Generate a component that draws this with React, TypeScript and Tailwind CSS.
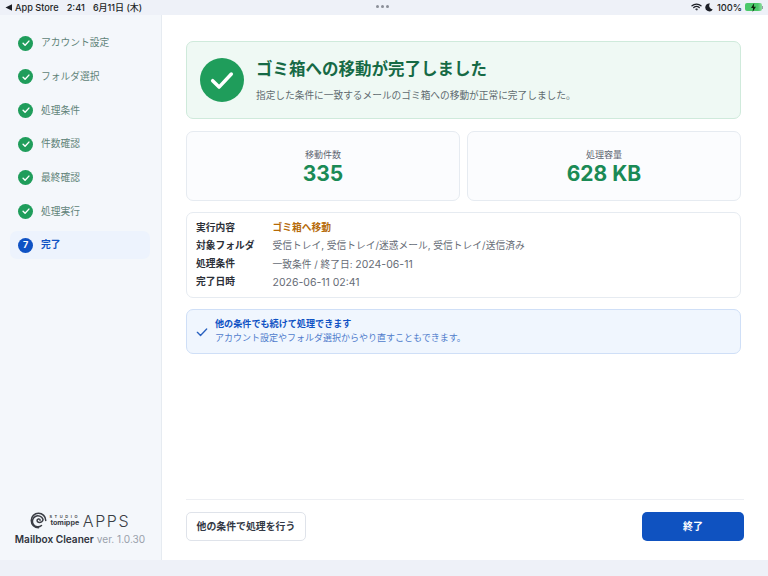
import React from "react";

const font = { fontFamily: '"Inter","Noto Sans CJK JP","Liberation Sans",sans-serif' };

function Check({ className = "", w = 3 }: { className?: string; w?: number }) {
  return (
    <svg viewBox="0 0 24 24" fill="none" stroke="currentColor" strokeWidth={w} strokeLinecap="round" strokeLinejoin="round" className={className}>
      <path d="M5 12.5l4.8 4.8L19 7.5" />
    </svg>
  );
}

const steps = ["アカウント設定", "フォルダ選択", "処理条件", "件数確認", "最終確認", "処理実行"];

function StatusBar() {
  return (
    <div className="relative flex h-[15px] items-center justify-between bg-[#eef1f8] pl-[5px] pr-[5px] text-[9.3px] leading-none text-[#1c1f26]">
      <div className="flex items-center font-medium">
        <svg width="8" height="7" viewBox="0 0 8 7" className="mr-[2px]"><path d="M0.5 3.5L7 0.3V6.7Z" fill="#1c1f26" /></svg>
        <span className="text-[9.2px]">App Store</span>
        <span className="ml-[8px]">2:41</span>
        <span className="ml-[8px] text-[9px]">6月11日 (木)</span>
      </div>
      <div className="absolute left-[376px] top-[5px] flex gap-[2px]">
        <span className="h-[3px] w-[3px] rounded-full bg-[#8b8f98]" />
        <span className="h-[3px] w-[3px] rounded-full bg-[#8b8f98]" />
        <span className="h-[3px] w-[3px] rounded-full bg-[#8b8f98]" />
      </div>
      <div className="flex items-center font-medium">
        <svg width="11" height="8" viewBox="0 0 22 16" fill="none" stroke="#1c1f26" strokeWidth="2.6" strokeLinecap="round">
          <path d="M2 5.5C7 1 15 1 20 5.5" />
          <path d="M5.5 9C8.5 6.5 13.5 6.5 16.5 9" />
          <path d="M11 14.2L9 12Q11 10.5 13 12Z" fill="#1c1f26" strokeWidth="1" />
        </svg>
        <svg width="8" height="9" viewBox="0 0 16 18" className="ml-[3px]"><path d="M10 1A8 8 0 1 0 15.5 13 7.5 7.5 0 0 1 10 1Z" fill="#1c1f26" /></svg>
        <span className="ml-[4px]">100%</span>
        <div className="ml-[3px] flex h-[8px] w-[17px] items-center justify-center rounded-[2px] bg-[linear-gradient(90deg,#4cc96b_0%,#4cc96b_75%,#8fdca3_100%)]">
          <svg width="7" height="9" viewBox="0 0 6 8"><path d="M3.6 0L0.8 4.5H2.6L2.2 8L5.2 3.3H3.3Z" fill="#10240f" /></svg>
        </div>
        <span className="h-[3px] w-[1px] bg-[#9aa0a8]" />
      </div>
    </div>
  );
}

function Logo() {
  return (
    <div className="flex items-center justify-center">
      <svg width="17" height="17" viewBox="0 0 34 34" fill="none" stroke="#3a3d44" strokeLinecap="round">
        <path d="M17 31.5A14.5 14.5 0 1 1 31.5 17" strokeWidth="3" />
        <path d="M23 27A11 11 0 1 1 26 14.5C26.5 19 21 21.5 17 20.5C13.5 19.5 13 15 16.5 14C19 13.4 20.5 15 20 16.5" strokeWidth="3" />
      </svg>
      <div className="ml-[3px] flex w-[30px] flex-col items-center text-[#3a3d44]">
        <span className="text-[4px] font-semibold leading-[5px] tracking-[2.6px]">STUDIO</span>
        <span className="whitespace-nowrap text-[7.2px] font-bold leading-[8px]">tomippe</span>
      </div>
      <span className="ml-[3px] text-[16px] font-light leading-none tracking-[1.6px] text-[#3a3d44]">APPS</span>
    </div>
  );
}

function Sidebar() {
  return (
    <aside className="flex w-[162px] shrink-0 flex-col justify-between border-r border-[#e6ebf1] bg-[#f4f7fb] pb-[14px] pl-[10px] pr-[11px] pt-[14px]">
      <nav className="flex flex-col gap-[5.7px]">
        {steps.map((s) => (
          <div key={s} className="flex h-[28px] items-center gap-[8px] pl-[8px]">
            <span className="flex h-[15px] w-[15px] items-center justify-center rounded-full bg-[#1f9d5b] text-white">
              <Check className="h-[10px] w-[10px]" w={3.4} />
            </span>
            <span className="pt-[1px] text-[9.75px] text-[#5f8378]">{s}</span>
          </div>
        ))}
        <div className="flex h-[28px] items-center gap-[8px] rounded-[7px] bg-[#edf3fd] pl-[8px]">
          <span className="flex h-[15px] w-[15px] items-center justify-center rounded-full bg-[#0f52c4] text-[9px] font-bold text-white">7</span>
          <span className="pt-[1px] text-[9.75px] font-bold text-[#0f52c4]">完了</span>
        </div>
      </nav>
      <div className="flex flex-col items-center gap-[3px]">
        <Logo />
        <div className="whitespace-nowrap text-[10.1px] leading-[14px]">
          <span className="font-semibold text-[#2f333b]">Mailbox Cleaner</span>
          <span className="ml-[3px] text-[#9aa1ab]">ver. 1.0.30</span>
        </div>
      </div>
    </aside>
  );
}

function Stat({ label, value }: { label: string; value: string }) {
  return (
    <div className="flex h-[70px] flex-1 flex-col items-center justify-center rounded-[7px] border border-[#e6ebf1] bg-[#fbfcfe] pt-[2px]">
      <span className="text-[9px] leading-[13px] text-[#5d6470]">{label}</span>
      <span className="text-[21px] font-bold leading-[26px] text-[#1a8a55]">{value}</span>
    </div>
  );
}

function Row({ k, children }: { k: string; children: React.ReactNode }) {
  return (
    <div className="flex h-[18px] items-center text-[9.75px]">
      <span className="w-[76.5px] shrink-0 font-semibold text-[#2c3038]">{k}</span>
      {children}
    </div>
  );
}

function Main() {
  return (
    <main className="flex min-w-0 flex-1 flex-col bg-white pb-[19px] pl-[24px] pr-[24px] pt-[26px]">
      <div className="flex flex-1 flex-col gap-[11px] pr-[3px]">
        <section className="mb-[1px] flex h-[78px] items-center rounded-[7px] border border-[#cfeadb] bg-[#eff9f4] pl-[13px]">
          <span className="flex h-[44px] w-[44px] items-center justify-center rounded-full bg-[#1f9d5b] text-white">
            <Check className="h-[32px] w-[32px]" w={2.6} />
          </span>
          <div className="ml-[12px]">
            <div className="text-[16.5px] font-bold leading-[22px] text-[#166a45]">ゴミ箱への移動が完了しました</div>
            <div className="mt-[9px] text-[9.7px] leading-[14px] text-[#5f6b70]">指定した条件に一致するメールのゴミ箱への移動が正常に完了しました。</div>
          </div>
        </section>
        <section className="flex gap-[7px]">
          <Stat label="移動件数" value="335" />
          <Stat label="処理容量" value="628 KB" />
        </section>
        <section className="flex h-[86px] flex-col justify-center rounded-[7px] border border-[#e6ebf1] bg-white pl-[9px] pt-[1px]">
          <Row k="実行内容"><span className="font-semibold text-[#b56a08]">ゴミ箱へ移動</span></Row>
          <Row k="対象フォルダ"><span className="text-[#666c76]">受信トレイ, 受信トレイ/迷惑メール, 受信トレイ/送信済み</span></Row>
          <Row k="処理条件"><span className="whitespace-pre text-[#666c76]">一致条件 / 終了日: <span className="text-[10.5px]">2024-06-11</span></span></Row>
          <Row k="完了日時"><span className="text-[10.5px] text-[#666c76]">2026-06-11 02:41</span></Row>
        </section>
        <section className="flex h-[45px] items-center rounded-[7px] border border-[#cfdff7] bg-[#f0f6fe] pl-[7px]">
          <Check className="h-[16px] w-[16px] text-[#2a62c0]" w={2} />
          <div className="ml-[5px] -mt-[1px]">
            <div className="text-[9.1px] font-semibold leading-[14px] text-[#0f52c4]">他の条件でも続けて処理できます</div>
            <div className="text-[9px] leading-[14px] text-[#4f7ccc]">アカウント設定やフォルダ選択からやり直すこともできます。</div>
          </div>
        </section>
      </div>
      <footer className="flex items-center justify-between border-t border-[#edeff3] pt-[12px]">
        <button className="h-[29px] w-[120px] rounded-[5px] border border-[#dfe3ea] bg-white text-[9.9px] font-semibold text-[#333844]">他の条件で処理を行う</button>
        <button className="h-[29px] w-[102px] rounded-[5px] bg-[#0f52c0] text-[10px] font-semibold text-white">終了</button>
      </footer>
    </main>
  );
}

export default function App() {
  return (
    <div className="flex h-[576px] w-[768px] flex-col overflow-hidden bg-[#eef1f8]" style={font}>
      <StatusBar />
      <div className="flex h-[545px]">
        <Sidebar />
        <Main />
      </div>
    </div>
  );
}
